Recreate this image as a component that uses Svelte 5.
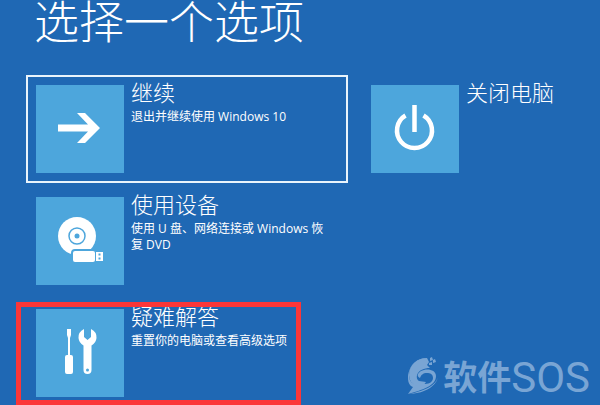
<script lang="ts">
  const options = [
    { id: "continue", title: "继续", text: "退出并继续使用 Windows 10" },
    { id: "power", title: "关闭电脑", text: "" },
    { id: "device", title: "使用设备", text: "使用 U 盘、网络连接或 Windows 恢复 DVD" },
    { id: "troubleshoot", title: "疑难解答", text: "重置你的电脑或查看高级选项" },
  ];

  let selected = $state("continue");
</script>

<main>
  <h1>选择一个选项</h1>

  <div class="options">
    {#each options as o (o.id)}
      <button class="option {o.id}" class:selected={selected === o.id} onclick={() => (selected = o.id)}>
        <span class="tile">
          <svg viewBox="0 0 88 88" aria-hidden="true">
            {#if o.id === "continue"}
              <path d="M22 39.500h30L41 28h8l15 15-15 15h-8l11-11.500H22z" />
            {:else if o.id === "power"}
              <path class="line" d="M34.500 30.500A17.500 17.500 0 1 0 52.500 30.500" />
              <path class="line" d="M43.500 20v27" />
            {:else if o.id === "device"}
              <circle cx="41" cy="39" r="19" />
              <circle class="ring" cx="41" cy="39" r="8" />
              <circle class="cut" cx="41" cy="39" r="2.500" />
              <rect class="usb" x="36" y="53" width="24" height="13" rx="3" />
              <path d="M60 55h7v9h-7z" />
              <path class="cut" d="M62.500 56.500h2v2h-2zM62.500 60.500h2v2h-2z" />
            {:else}
              <path d="M31 20h4v6l-1 3v17h1q2 0 2 2v15q0 2-2 2h-4q-2 0-2-2V48q0-2 2-2h1V29l-1-3z" />
              <path d="M48 20q-6 3-5.500 9 .5 5 5 7.500V61q0 4 4 4t4-4V36.500q4.500-2.500 5-7.500 .5-6-5.500-9v8l-3.500 3-3.500-3z" />
              <circle class="cut" cx="51.500" cy="61" r="1.500" />
            {/if}
          </svg>
        </span>
        <span class="label">
          <span class="title">{o.title}</span>
          {#if o.text}<span class="text">{o.text}</span>{/if}
        </span>
      </button>
    {/each}
  </div>

  <div class="watermark">
    <svg viewBox="0 0 32 40" aria-hidden="true">
      <path d="M20 2C9 3 2 11 2 19c0 6 3 9 8 9h8c5 0 8-3 8-6 0-4-3-5-6-5-4 0-6 2-7 5-4-2-2-5 1-7 5-3 15-2 15 5 0 10-14 14-28 18l5-7c-3-1-5-4-5-9C1 12 8 2 20 2z" />
      <path d="M2 19C2 9 10 2 20 2l2 4-2 3 3 3C17 12 12 14 10 19q-1 4 2 6l7 1q-2 4-8 4-9-2-9-11z" />
      <path d="M31 17c1 12-12 17-28 21 15-1 29-8 28-21zM23 2l2-1 1 3-3 1zM26 4l2-1 1 3-3 1zM22 7l3-1 0 3-3 0z" />
    </svg>
    <span class="cn">软件</span><span class="en">SOS</span>
  </div>
</main>

<style>
  :global(body) { background: #1f68b4; }

  main {
    position: relative; box-sizing: border-box; height: 100vh; overflow: hidden;
    padding-left: 26px; color: #fff;
    font-family: "Open Sans", "Noto Sans CJK SC", sans-serif;
  }
  h1 {
    margin: 0 0 35px; padding-left: 8px;
    font-family: "Noto Sans CJK SC", sans-serif;
    font-size: 45px; line-height: 40px; font-weight: 300; white-space: nowrap;
  }

  .options {
    display: grid; grid-template-columns: minmax(0, 322px) minmax(0, 1fr);
    gap: 4px 13px;
  }
  .option {
    position: relative; display: flex; gap: 7px; align-items: flex-start;
    padding: 0 8px; border: 2px solid transparent; background: none;
    color: inherit; font: inherit; text-align: left;
  }
  .option.selected { border-color: #e9f4fc; }
  .device, .troubleshoot { grid-column: 1; }
  .troubleshoot::after {
    content: ""; position: absolute; top: 1px; left: -12px;
    box-sizing: border-box; width: 285px; height: 103px;
    border: 5px solid #fb3638;
  }

  .tile { flex: none; width: 88px; height: 88px; margin: 8px 0; background: #4da6dc; }
  .tile svg { display: block; fill: #fff; }
  .tile .line { fill: none; stroke: #fff; stroke-width: 4.5; }
  .tile .ring { fill: none; stroke: #4da6dc; stroke-width: 1.5; }
  .tile .cut { fill: #4da6dc; }
  .tile .usb { stroke: #4da6dc; stroke-width: 2; }

  .label { display: flex; flex-direction: column; gap: 6px; padding: 2px 8px 0 0; }
  .title { font-family: "Noto Sans CJK SC", sans-serif; font-size: 22px; line-height: 24px; font-weight: 300; }
  .text { font-size: 12px; line-height: 16px; }
  .device .text { padding-right: 4px; }

  .watermark {
    position: absolute; right: 10px; bottom: 5px;
    display: flex; align-items: flex-start; color: #79a5d4;
    line-height: 44px;
  }
  .watermark svg { width: 32px; height: 40px; margin-right: 4px; fill: currentColor; }
  .cn { font-family: "Noto Sans CJK SC", sans-serif; font-size: 34px; line-height: 40px; font-weight: 700; }
  .en { font-family: Roboto, sans-serif; font-size: 42px; font-weight: 400; }
</style>
